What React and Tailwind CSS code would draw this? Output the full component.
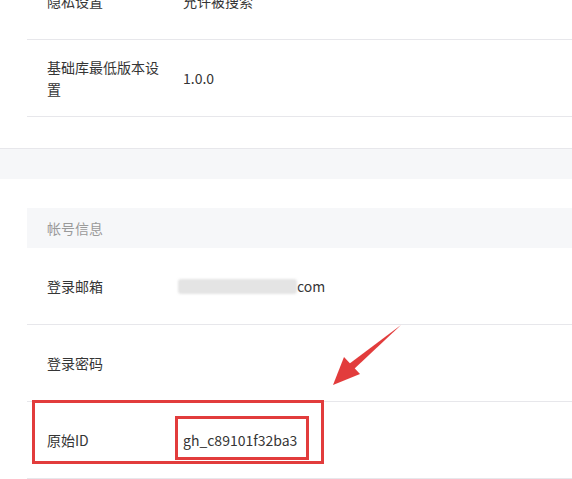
import React from 'react';

const font = { fontFamily: '"Microsoft YaHei", "Noto Sans CJK SC", "Noto Sans", sans-serif' };

function Row({ label, children, className = '' }) {
  return (
    <div className={`flex items-center h-[77px] shrink-0 border-b border-[#e7e7eb] ${className}`}>
      <div className="w-[156px] pl-[20px] pr-[4px] shrink-0 text-[14px] leading-[22px] text-[#353535]">
        <div className="w-[120px]">{label}</div>
      </div>
      <div className="text-[14px] text-[#353535]">{children}</div>
    </div>
  );
}

export default function App() {
  return (
    <div className="relative w-[572px] h-[479px] overflow-hidden bg-white flex flex-col" style={font}>
      {/* top section */}
      <div className="pl-[27px] h-[148px] shrink-0 flex flex-col">
        <Row label="隐私设置" className="-mt-[37px]">允许被搜索</Row>
        <Row label="基础库最低版本设置">1.0.0</Row>
      </div>
      <div className="h-[31px] shrink-0 bg-[#f6f7f9] border-t border-[#e7e7eb]" />

      {/* account section */}
      <div className="pl-[27px] pt-[29px] flex flex-col">
        <div className="h-[40px] shrink-0 bg-[#f6f7f9] flex items-center pl-[20px] text-[14px] text-[#9a9a9a]">帐号信息</div>
        <Row label="登录邮箱">
          <div className="flex items-center -ml-[5px]">
            <div className="w-[119px] h-[15px] bg-[#e4e4e4] rounded-[3px] blur-[1px]" />
            <span className="text-[14px]">com</span>
          </div>
        </Row>
        <Row label="登录密码"></Row>
        <Row label="原始ID">gh_c89101f32ba3</Row>
      </div>

      {/* annotations */}
      <div className="absolute left-[32px] top-[400px] w-[292px] h-[64px] border-[3px] border-[#e23c3c]" />
      <div className="absolute left-[175px] top-[416px] w-[134px] h-[44px] border-[3px] border-[#e23c3c]" />
      <svg className="absolute left-0 top-0" width="572" height="479" viewBox="0 0 572 479">
        <path d="M401 325 L349 364 L353 370 Z" fill="#e23c3c" />
        <path d="M333 385 L344 357 L360 374 Z" fill="#e23c3c" />
      </svg>
    </div>
  );
}
